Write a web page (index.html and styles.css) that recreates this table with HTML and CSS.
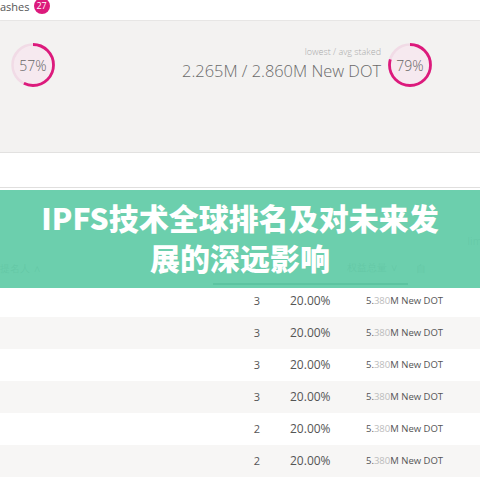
FILE: index.html
```html
<!DOCTYPE html>
<html>
<head>
<meta charset="utf-8">
<link rel="stylesheet" href="styles.css">
</head>
<body>
<div class="page">
  <div class="topbar">
    <span class="tab">ashes</span>
    <span class="badge">27</span>
  </div>
  <div class="stats">
    <div class="donut">
      <svg width="46" height="46" viewBox="0 0 46 46">
        <circle cx="23" cy="23" r="20.5" fill="#f6e9ef" stroke="#f1dbe6" stroke-width="2.5"/>
        <circle cx="23" cy="23" r="20.5" fill="none" stroke="#dc1a7c" stroke-width="2.8" stroke-dasharray="73.4 200" transform="rotate(-90 23 23)"/>
      </svg>
      <span class="pct">57%</span>
    </div>
    <div class="mid">
      <div class="label">lowest / avg staked</div>
      <div class="value">2.265M / 2.860M New DOT</div>
    </div>
    <div class="donut">
      <svg width="46" height="46" viewBox="0 0 46 46">
        <circle cx="23" cy="23" r="20.5" fill="#f6e9ef" stroke="#f1dbe6" stroke-width="2.5"/>
        <circle cx="23" cy="23" r="20.5" fill="none" stroke="#dc1a7c" stroke-width="2.8" stroke-dasharray="101.8 200" transform="rotate(-90 23 23)"/>
      </svg>
      <span class="pct">79%</span>
    </div>
  </div>
  <div class="toolbar"></div>
  <div class="table">
    <div class="filter"><span class="limit">limit</span></div>
    <div class="thead">
      <span class="th th-name">提名人 ∧</span>
      <span class="th th-comm">Commission ∧</span>
      <span class="th th-total">权益总量 ∨</span>
      <span class="th th-own">自</span>
    </div>
    <div class="row"><span class="c-num">3</span><span class="c-pct">20.00%</span><span class="c-val">5.<span class="dim">380</span>M New DOT</span></div>
    <div class="row alt"><span class="c-num">3</span><span class="c-pct">20.00%</span><span class="c-val">5.<span class="dim">380</span>M New DOT</span></div>
    <div class="row"><span class="c-num">3</span><span class="c-pct">20.00%</span><span class="c-val">5.<span class="dim">380</span>M New DOT</span></div>
    <div class="row alt"><span class="c-num">3</span><span class="c-pct">20.00%</span><span class="c-val">5.<span class="dim">380</span>M New DOT</span></div>
    <div class="row"><span class="c-num">2</span><span class="c-pct">20.00%</span><span class="c-val">5.<span class="dim">380</span>M New DOT</span></div>
    <div class="row alt"><span class="c-num">2</span><span class="c-pct">20.00%</span><span class="c-val">5.<span class="dim">380</span>M New DOT</span></div>
  </div>
  <div class="banner">
    <h1 class="title">IPFS技术全球排名及对未来发展的深远影响</h1>
  </div>
</div>
</body>
</html>
```
FILE: styles.css
```css
* { box-sizing: border-box; }
html, body { margin: 0; padding: 0; background: #fff; }
body { font-family: "Open Sans", "Noto Sans", sans-serif; color: #555; }
.page { position: relative; width: 480px; height: 480px; overflow: hidden; }

.topbar {
  height: 21px;
  display: flex;
  align-items: flex-start;
  gap: 4px;
  border-bottom: 1px solid #e8e7e6;
  background: #fff;
}
.tab { font-size: 11px; line-height: 13px; color: #555; }
.badge {
  width: 16px; height: 16px; margin-top: -2px;
  border-radius: 50%;
  background: #dc1a7c;
  color: #fff;
  font-size: 9px;
  line-height: 16px;
  text-align: center;
}

.stats {
  height: 132px;
  background: #f3f2f1;
  display: flex;
  align-items: flex-start;
  padding: 21px 47px 0 10px;
  border-bottom: 1px solid #e2e1e0;
  box-shadow: 0 1px 2px rgba(0,0,0,0.06);
}
.donut { position: relative; width: 46px; height: 46px; }
.donut svg { display: block; }
.pct {
  position: absolute; inset: 0;
  display: flex; align-items: center; justify-content: center;
  font-size: 14px; font-weight: 300; color: #666;
}
.mid { flex: 1; text-align: right; padding-right: 6px; padding-top: 4px; }
.label { font-size: 9px; color: #aaa; font-weight: 300; line-height: 12px; }
.value { font-size: 16.4px; color: #6a6a6a; font-weight: 300; line-height: 22px; margin-top: 2px; }

.toolbar { height: 35px; background: #fff; border-bottom: 1px solid #e0dfde; }

.table { background: #fff; }
.filter { height: 64px; display: flex; justify-content: flex-end; align-items: flex-end; padding-bottom: 4px; }
.limit { font-size: 10px; color: #aaa; margin-right: -8px; }
.thead { height: 33px; position: relative; display: grid; grid-template-columns: 212px 54px 120px 75px 1fr; align-items: center; font-size: 10px; color: #999; }
.th-total { border-bottom: 2px solid #2f6b58; height: 100%; display: flex; align-items: center; justify-content: flex-end; padding-right: 10px; margin-left: -53px; margin-right: -22px; }
.th-comm { white-space: nowrap; }
.th-own { padding-left: 30px; }

.row {
  height: 32px;
  display: grid;
  grid-template-columns: 237px 40px 89px 1fr;
  align-items: center;
  font-size: 12px;
  color: #555;
  padding-bottom: 2px;
}
.row.alt { background: #f7f6f5; }
.c-num { grid-column: 2; text-align: center; font-size: 11px; }
.c-pct { grid-column: 3; padding-left: 13px; }
.c-val { grid-column: 4; font-size: 9.5px; }
.dim { color: #bbb; }

.banner {
  position: absolute;
  left: 0; right: 0; top: 190px;
  height: 98px;
  background: rgba(97, 203, 167, 0.93);
  display: flex;
  align-items: center;
  justify-content: center;
  padding: 0 38px 4px;
}
.title {
  margin: 0;
  font-family: "Noto Sans CJK SC", "Noto Sans", sans-serif;
  font-weight: 900;
  font-size: 30px;
  line-height: 40px;
  color: #fff;
  text-align: center;
}
```
